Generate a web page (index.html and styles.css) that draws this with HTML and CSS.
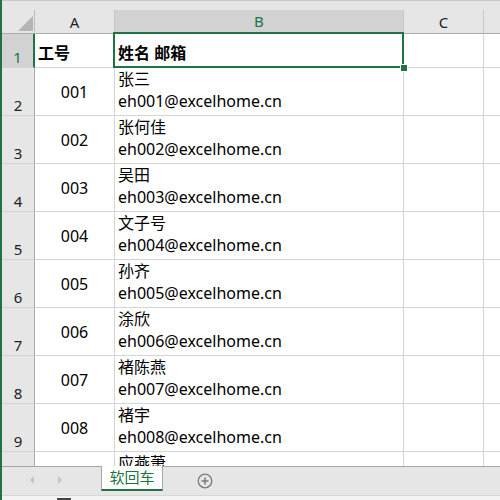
FILE: index.html
```html
<!DOCTYPE html>
<html lang="zh-CN">
<head>
<meta charset="utf-8">
<link rel="stylesheet" href="styles.css">
</head>
<body>
<div class="app">
  <div class="topbar"></div>
  <div class="sheet">
    <div class="grid">
      <div class="hd corner"><span class="tri"></span></div>
      <div class="hd col">A</div>
      <div class="hd col sel-col">B</div>
      <div class="hd col">C</div>
      <div class="hd col"></div>

      <div class="hd rn sel-row">1</div>
      <div class="c bold">工号</div>
      <div class="c bold">姓名 邮箱</div>
      <div class="c"></div>
      <div class="c"></div>

      <div class="hd rn">2</div><div class="c num">001</div><div class="c wrap"><span>张三</span><span>eh001@excelhome.cn</span></div><div class="c"></div><div class="c"></div>
      <div class="hd rn">3</div><div class="c num">002</div><div class="c wrap"><span>张何佳</span><span>eh002@excelhome.cn</span></div><div class="c"></div><div class="c"></div>
      <div class="hd rn">4</div><div class="c num">003</div><div class="c wrap"><span>吴田</span><span>eh003@excelhome.cn</span></div><div class="c"></div><div class="c"></div>
      <div class="hd rn">5</div><div class="c num">004</div><div class="c wrap"><span>文子号</span><span>eh004@excelhome.cn</span></div><div class="c"></div><div class="c"></div>
      <div class="hd rn">6</div><div class="c num">005</div><div class="c wrap"><span>孙齐</span><span>eh005@excelhome.cn</span></div><div class="c"></div><div class="c"></div>
      <div class="hd rn">7</div><div class="c num">006</div><div class="c wrap"><span>涂欣</span><span>eh006@excelhome.cn</span></div><div class="c"></div><div class="c"></div>
      <div class="hd rn">8</div><div class="c num">007</div><div class="c wrap"><span>褚陈燕</span><span>eh007@excelhome.cn</span></div><div class="c"></div><div class="c"></div>
      <div class="hd rn">9</div><div class="c num">008</div><div class="c wrap"><span>褚宇</span><span>eh008@excelhome.cn</span></div><div class="c"></div><div class="c"></div>
      <div class="hd rn"></div><div class="c"></div><div class="c top">应燕萧</div><div class="c"></div><div class="c"></div>
    </div>
    <div class="selbox"><span class="handle"></span></div>
  </div>
  <div class="tabbar">
    <div class="navs">
      <svg class="arrow" width="8" height="10" viewBox="0 0 8 10"><path d="M6 1 L2 5 L6 9 Z" fill="#c4c4c4"/></svg>
      <svg class="arrow" width="8" height="10" viewBox="0 0 8 10"><path d="M2 1 L6 5 L2 9 Z" fill="#c4c4c4"/></svg>
    </div>
    <div class="tab">软回车</div>
    <svg class="add" width="16" height="16" viewBox="0 0 16 16"><circle cx="8" cy="8" r="6.8" fill="none" stroke="#7a7a7a" stroke-width="1.3"/><path d="M8 4.5 V11.5 M4.5 8 H11.5" stroke="#7a7a7a" stroke-width="1.5"/></svg>
  </div>
  <div class="status"><span class="sq"></span></div>
</div>
</body>
</html>
```
FILE: styles.css
```css
* { box-sizing: border-box; }
html, body { margin: 0; padding: 0; }
body {
  width: 500px;
  height: 500px;
  overflow: hidden;
  background: #fff;
  font-family: "Noto Sans", "Noto Sans CJK SC", sans-serif;
  font-size: 16px;
  color: #000;
}
.app {
  width: 500px;
  height: 500px;
  display: flex;
  flex-direction: column;
  border-left: 2px solid #217346;
  overflow: hidden;
}
.topbar {
  height: 10px;
  flex: none;
  background: #e6e6e6;
  border-top: 1px solid #c8c8c8;
}
.sheet {
  position: relative;
  height: 456px;
  flex: none;
  overflow: hidden;
}
.grid {
  display: grid;
  grid-template-columns: 33px 80px 289px 80px 100px;
  grid-template-rows: 24px 34px repeat(8, 48px) 15px;
}
.hd {
  background: #e6e6e6;
  border-right: 1px solid #c6c6c6;
  border-bottom: 1px solid #c6c6c6;
  color: #222;
  display: flex;
  justify-content: center;
  font-size: 15px;
}
.col { align-items: center; border-bottom-color: #ababab; }
.corner { position: relative; border-right-color: #bdbdbd; border-bottom-color: #ababab; }
.tri {
  position: absolute;
  right: 1px;
  bottom: 2px;
  width: 0;
  height: 0;
  border-left: 15px solid transparent;
  border-bottom: 15px solid #b4b4b4;
}
.sel-col {
  background: #d2d2d2;
  color: #217346;
  border-bottom: 2px solid #217346;
}
.rn {
  align-items: flex-end;
  padding-bottom: 0;
  line-height: 20px;
  border-right-color: #ababab;
  border-bottom-color: #d4d4d4;
}
.sel-row {
  background: #d2d2d2;
  color: #217346;
  border-right: 2px solid #217346;
}
.c {
  border-right: 1px solid #d4d4d4;
  border-bottom: 1px solid #d4d4d4;
  padding: 0 3px;
  white-space: nowrap;
  overflow: hidden;
}
.bold {
  font-weight: bold;
  display: flex;
  align-items: center;
  padding-top: 2px;
}
.num {
  display: flex;
  align-items: center;
  justify-content: center;
}
.wrap {
  display: flex;
  flex-direction: column;
  justify-content: flex-end;
  line-height: 22px;
  padding-bottom: 3px;
}
.top {
  line-height: 8px;
  padding-top: 7px;
  border-bottom: none;
}
.selbox {
  position: absolute;
  left: 111px;
  top: 22px;
  width: 291px;
  height: 36px;
  border: 2px solid #217346;
}
.handle {
  position: absolute;
  right: -5px;
  bottom: -5px;
  width: 6px;
  height: 6px;
  background: #217346;
  border: 1px solid #fff;
  box-sizing: content-box;
  margin: -1px;
}
.tabbar {
  height: 29px;
  flex: none;
  background: #e6e6e6;
  border-top: 1px solid #a6a6a6;
  display: flex;
  align-items: flex-start;
}
.navs {
  width: 99px;
  display: flex;
  gap: 20px;
  padding: 8px 0 0 26px;
}
.tab {
  margin-top: -1px;
  width: 62px;
  height: 25px;
  background: #fff;
  border-left: 1px solid #a6a6a6;
  border-right: 1px solid #a6a6a6;
  border-bottom: 2px solid #217346;
  color: #217346;
  font-size: 15px;
  line-height: 22px;
  text-align: center;
}
.add { margin: 6px 0 0 34px; }
.status {
  flex: none;
  height: 5px;
  background: #f3f3f3;
  border-top: 1px solid #d6d6d6;
  position: relative;
  overflow: hidden;
}
.sq { position: absolute; left: 55px; top: 2px; width: 14px; height: 2px; background: #444; }
```
